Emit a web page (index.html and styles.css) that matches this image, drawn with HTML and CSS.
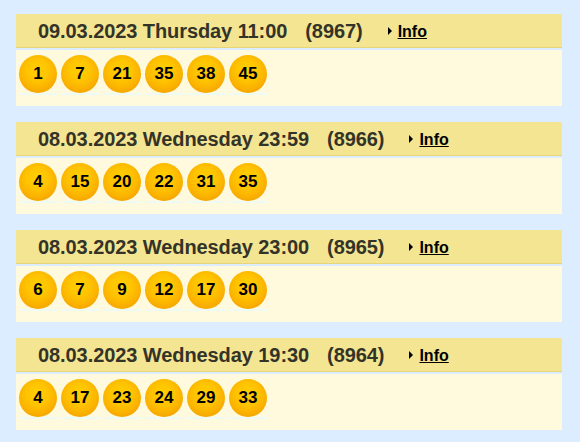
FILE: index.html
```html
<!DOCTYPE html>
<html>
<head>
<meta charset="utf-8">
<link rel="stylesheet" href="styles.css">
</head>
<body>
<div class="draw">
  <div class="head"><span class="when">09.03.2023 Thursday 11:00</span><span class="num">(8967)</span><span class="arrow"></span><a class="info" href="#">Info</a></div>
  <div class="balls"><span class="ball">1</span><span class="ball">7</span><span class="ball">21</span><span class="ball">35</span><span class="ball">38</span><span class="ball">45</span></div>
</div>
<div class="draw">
  <div class="head"><span class="when">08.03.2023 Wednesday 23:59</span><span class="num">(8966)</span><span class="arrow"></span><a class="info" href="#">Info</a></div>
  <div class="balls"><span class="ball">4</span><span class="ball">15</span><span class="ball">20</span><span class="ball">22</span><span class="ball">31</span><span class="ball">35</span></div>
</div>
<div class="draw">
  <div class="head"><span class="when">08.03.2023 Wednesday 23:00</span><span class="num">(8965)</span><span class="arrow"></span><a class="info" href="#">Info</a></div>
  <div class="balls"><span class="ball">6</span><span class="ball">7</span><span class="ball">9</span><span class="ball">12</span><span class="ball">17</span><span class="ball">30</span></div>
</div>
<div class="draw">
  <div class="head"><span class="when">08.03.2023 Wednesday 19:30</span><span class="num">(8964)</span><span class="arrow"></span><a class="info" href="#">Info</a></div>
  <div class="balls"><span class="ball">4</span><span class="ball">17</span><span class="ball">23</span><span class="ball">24</span><span class="ball">29</span><span class="ball">33</span></div>
</div>
</body>
</html>
```
FILE: styles.css
```css
html, body {
  margin: 0;
  padding: 0;
  background: #dbedfe;
}
body {
  padding: 14px 18px 0 16px;
  font-family: "Liberation Sans", Arial, sans-serif;
}
.draw {
  width: 546px;
  margin-bottom: 16px;
}
.head {
  height: 33px;
  background: #f3e592;
  border-bottom: 1px solid #e8d57a;
  display: flex;
  align-items: center;
  padding-left: 22px;
  color: #333328;
  font-size: 20px;
  letter-spacing: -0.08px;
  font-weight: bold;
  line-height: 1;
}
.num {
  margin-left: 18px;
}
.arrow {
  width: 0;
  height: 0;
  border-top: 4px solid transparent;
  border-bottom: 4px solid transparent;
  border-left: 4px solid #000;
  margin-left: 25px;
  margin-right: 6px;
  margin-top: 1px;
}
.info {
  color: #000;
  font-size: 16px;
  letter-spacing: 0;
  font-weight: bold;
  text-decoration: underline;
  margin-top: 2px;
}
.balls {
  margin-top: 2px;
  height: 56px;
  box-sizing: border-box;
  background: #fff9dd;
  display: flex;
  gap: 4px;
  padding: 5px 0 0 3px;
  align-items: flex-start;
}
.ball {
  width: 38px;
  height: 38px;
  border-radius: 50%;
  background: radial-gradient(circle at 48% 40%, #ffd000 0%, #ffc400 35%, #fbb300 60%, #f3a200 80%, #eca41c 93%, #ecc06a 100%);
  display: flex;
  align-items: center;
  justify-content: center;
  font-size: 17px;
  font-weight: bold;
  color: #000;
  position: relative;
}
.ball::after {
  content: "";
  position: absolute;
  left: 0;
  right: 0;
  bottom: -2px;
  height: 2px;
  background: #eefaf6;
}
```
